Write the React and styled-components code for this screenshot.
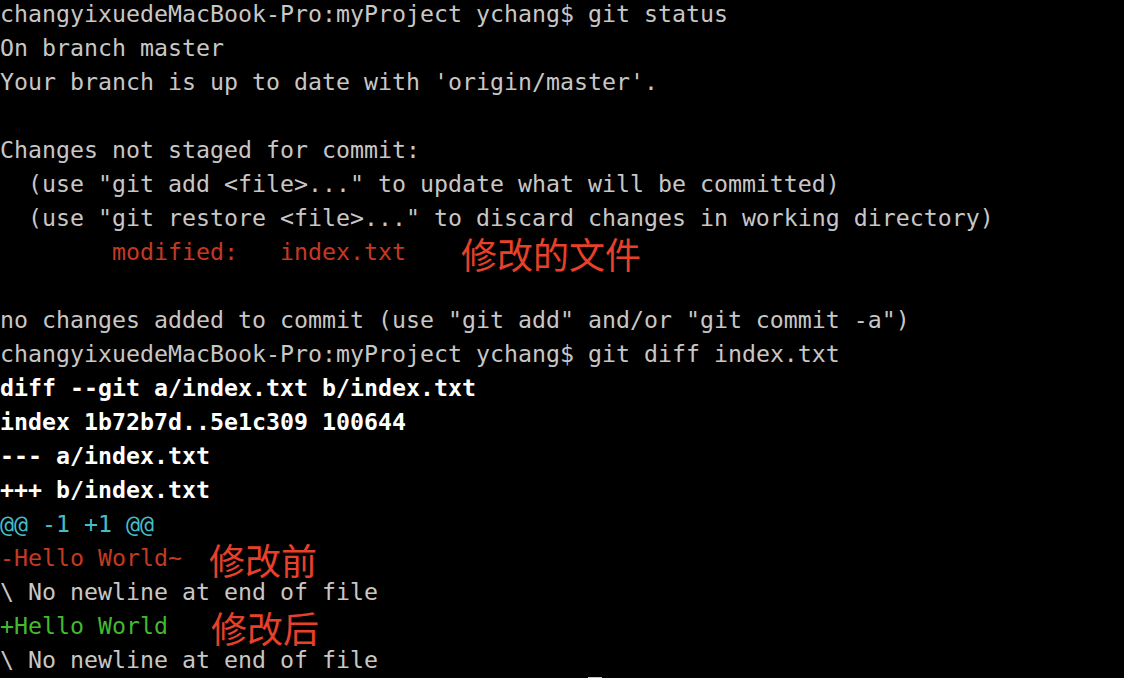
import React from 'react';
import styled, { createGlobalStyle } from 'styled-components';

const GlobalStyle = createGlobalStyle`
  html, body {
    margin: 0;
    padding: 0;
    background: #000;
    overflow: hidden;
  }
`

const Terminal = styled.div`
  width: 1124px;
  height: 678px;
  overflow: hidden;
  background: #000;
  font-family: "DejaVu Sans Mono", "Liberation Mono", monospace;
  font-size: 23.25px;
  line-height: 34px;
  color: #c7c7c7;
`

const Scroll = styled.div`
  margin-top: -3px;
`

const tones = {
  plain: { color: '#c7c7c7', weight: 'normal' },
  bold: { color: '#ffffff', weight: 'bold' },
  red: { color: '#c23a23', weight: 'normal' },
  cyan: { color: '#45bcc6', weight: 'normal' },
  green: { color: '#43ba2e', weight: 'normal' },
}

const Line = styled.div`
  height: 34px;
  white-space: pre;
  color: ${p => tones[p.tone || 'plain'].color};
  font-weight: ${p => tones[p.tone || 'plain'].weight};
`

const Note = styled.span`
  display: inline-block;
  height: 34px;
  line-height: 34px;
  vertical-align: top;
  margin-left: ${p => p.gap}px;
  font-family: "Noto Sans CJK SC", "Noto Sans", sans-serif;
  font-size: 36px;
  font-weight: normal;
  color: #e8402a;
  transform: translateY(1px);
`

const Cursor = styled.span`
  display: inline-block;
  width: 14px;
  height: 34px;
  vertical-align: top;
  background: #bfbfbf;
`

const prompt = 'changyixuedeMacBook-Pro:myProject ychang$ ';

const App = () => {
  return (
    <>
      <GlobalStyle />
      <Terminal>
        <Scroll>
          <Line>{prompt}git status</Line>
          <Line>On branch master</Line>
          <Line>Your branch is up to date with 'origin/master'.</Line>
          <Line> </Line>
          <Line>Changes not staged for commit:</Line>
          <Line>  (use "git add &lt;file&gt;..." to update what will be committed)</Line>
          <Line>  (use "git restore &lt;file&gt;..." to discard changes in working directory)</Line>
          <Line tone="red">
            {'        modified:   index.txt'}
            <Note gap={55}>修改的文件</Note>
          </Line>
          <Line> </Line>
          <Line>no changes added to commit (use "git add" and/or "git commit -a")</Line>
          <Line>{prompt}git diff index.txt</Line>
          <Line tone="bold">diff --git a/index.txt b/index.txt</Line>
          <Line tone="bold">index 1b72b7d..5e1c309 100644</Line>
          <Line tone="bold">--- a/index.txt</Line>
          <Line tone="bold">+++ b/index.txt</Line>
          <Line tone="cyan">@@ -1 +1 @@</Line>
          <Line tone="red">
            -Hello World~
            <Note gap={27}>修改前</Note>
          </Line>
          <Line>\ No newline at end of file</Line>
          <Line tone="green">
            +Hello World
            <Note gap={43}>修改后</Note>
          </Line>
          <Line>\ No newline at end of file</Line>
          <Line>{prompt}<Cursor /></Line>
        </Scroll>
      </Terminal>
    </>
  )
};

export default App;
